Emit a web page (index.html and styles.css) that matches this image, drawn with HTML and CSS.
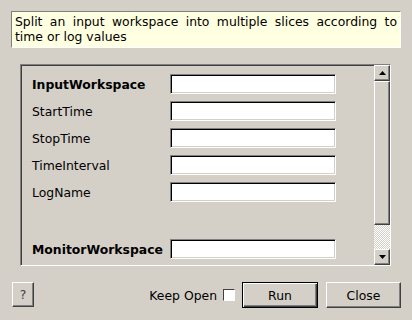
FILE: index.html
```html
<!DOCTYPE html>
<html lang="en">
<head>
    <meta charset="UTF-8">
    <meta name="viewport" content="width=device-width, initial-scale=1.0">
    <title>FilterEvents</title>
    <link rel="stylesheet" href="styles.css">
</head>
<body>
    <div class="dialog">
        <!-- Algorithm summary -->
        <div class="description">Split an input workspace into multiple slices according to time or log values</div>

        <!-- Property list -->
        <div class="params">
            <div class="param-list">
                <div class="param-row">
                    <label class="param-label required">InputWorkspace</label>
                    <input class="param-input" type="text">
                </div>
                <div class="param-row">
                    <label class="param-label">StartTime</label>
                    <input class="param-input" type="text">
                </div>
                <div class="param-row">
                    <label class="param-label">StopTime</label>
                    <input class="param-input" type="text">
                </div>
                <div class="param-row">
                    <label class="param-label">TimeInterval</label>
                    <input class="param-input" type="text">
                </div>
                <div class="param-row">
                    <label class="param-label">LogName</label>
                    <input class="param-input" type="text">
                </div>
                <div class="param-spacer"></div>
                <div class="param-row">
                    <label class="param-label required">MonitorWorkspace</label>
                    <input class="param-input" type="text">
                </div>
            </div>

            <div class="scrollbar">
                <button class="scroll-button">
                    <svg width="7" height="4" viewBox="0 0 7 4"><path d="M3.5 0 L7 4 L0 4 Z" fill="#000"/></svg>
                </button>
                <div class="scroll-thumb"></div>
                <div class="scroll-track"></div>
                <button class="scroll-button">
                    <svg width="7" height="4" viewBox="0 0 7 4"><path d="M0 0 L7 0 L3.5 4 Z" fill="#000"/></svg>
                </button>
            </div>
        </div>

        <!-- Buttons -->
        <div class="dialog-footer">
            <button class="dialog-button help-button">?</button>
            <div class="footer-actions">
                <label class="keep-open">Keep Open <span class="checkbox"></span></label>
                <button class="dialog-button default-button">Run</button>
                <button class="dialog-button close-button">Close</button>
            </div>
        </div>
    </div>
</body>
</html>
```

FILE: styles.css
```css
* {
    margin: 0;
    padding: 0;
    box-sizing: border-box;
}

body {
    font-family: 'DejaVu Sans', sans-serif;
    font-size: 12.4px;
    background-color: #d4d0c8;
    color: #000;
}

.dialog {
    padding: 11px 11px 0 11px;
}

/* Description */
.description {
    background-color: #ffffe1;
    border: 1px solid;
    border-color: #808080 #fff #fff #808080;
    padding: 2px 3px 3px 3px;
    line-height: 15px;
    text-align: justify;
}

/* Properties */
.params {
    display: flex;
    height: 202px;
    margin: 16px 10px 0 9px;
    border: 1px solid;
    border-color: #808080 #fff #fff #808080;
    box-shadow: inset 1px 1px #404040;
    overflow: hidden;
}

.param-list {
    flex: 1;
    display: flex;
    flex-direction: column;
    gap: 7px;
    padding: 9px 0 0 11px;
}

.param-row {
    display: flex;
    align-items: center;
    height: 20px;
    flex-shrink: 0;
}

.param-label {
    width: 138px;
}

.param-label.required {
    font-weight: bold;
}

.param-input {
    width: 166px;
    height: 20px;
    background-color: #fff;
    border: 1px solid;
    border-color: #808080 #fff #fff #808080;
    box-shadow: inset 1px 1px #000, inset -1px -1px #d4d0c8;
    font-family: 'DejaVu Sans', sans-serif;
    font-size: 12px;
    outline: none;
}

.param-spacer {
    height: 23px;
    flex-shrink: 0;
}

/* Scrollbar */
.scrollbar {
    width: 16px;
    display: flex;
    flex-direction: column;
}

.scroll-button {
    width: 16px;
    height: 16px;
    display: flex;
    align-items: center;
    justify-content: center;
    background-color: #d4d0c8;
    border: 1px solid;
    border-color: #fff #404040 #404040 #fff;
    box-shadow: inset -1px -1px #808080;
}

.scroll-thumb {
    height: 144px;
    background-color: #d4d0c8;
    border: 1px solid;
    border-color: #fff #404040 #404040 #fff;
    box-shadow: inset -1px -1px #808080;
}

.scroll-track {
    flex: 1;
    background: repeating-conic-gradient(#fff 0 25%, #d4d0c8 0 50%) 0 0 / 2px 2px;
}

/* Footer */
.dialog-footer {
    display: flex;
    justify-content: space-between;
    align-items: flex-start;
    margin: 16px 0 0 1px;
}

.footer-actions {
    display: flex;
    align-items: center;
}

.keep-open {
    display: flex;
    align-items: center;
}

.checkbox {
    width: 12px;
    height: 12px;
    margin: 0 7px 0 6px;
    background-color: #fff;
    border: 1px solid;
    border-color: #404040 #fff #fff #404040;
}

.dialog-button {
    height: 26px;
    background-color: #d4d0c8;
    border: 1px solid;
    border-color: #fff #404040 #404040 #fff;
    box-shadow: inset -1px -1px #808080;
    font-family: 'DejaVu Sans', sans-serif;
    font-size: 12.4px;
    color: #000;
}

.help-button {
    width: 22px;
    height: 25px;
    color: #404040;
}

.default-button {
    width: 76px;
    border-color: #000;
    box-shadow: inset 1px 1px #fff, inset -1px -1px #404040, inset -2px -2px #808080;
}

.close-button {
    width: 75px;
    margin-left: 8px;
}
```
